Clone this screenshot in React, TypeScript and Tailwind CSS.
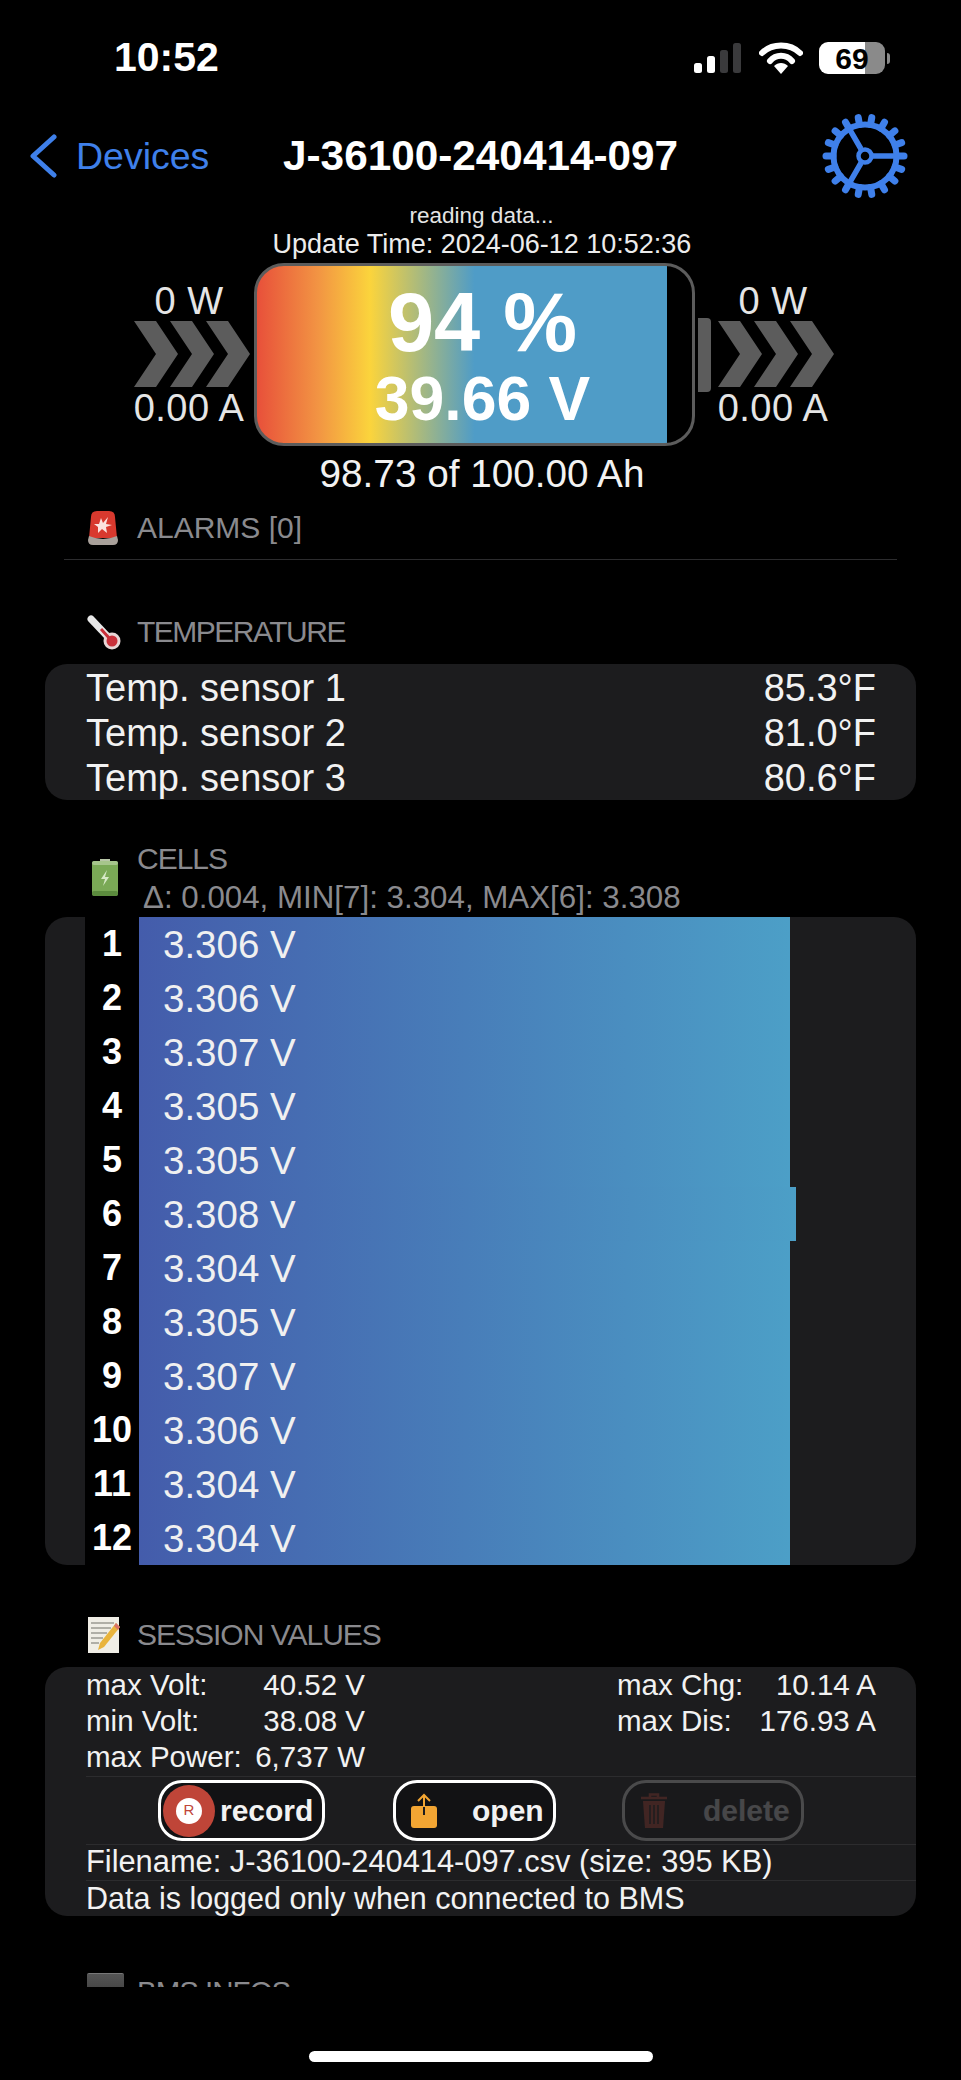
const cells = [
  { n: 1, v: "3.306" },
  { n: 2, v: "3.306" },
  { n: 3, v: "3.307" },
  { n: 4, v: "3.305" },
  { n: 5, v: "3.305" },
  { n: 6, v: "3.308", max: true },
  { n: 7, v: "3.304" },
  { n: 8, v: "3.305" },
  { n: 9, v: "3.307" },
  { n: 10, v: "3.306" },
  { n: 11, v: "3.304" },
  { n: 12, v: "3.304" },
];

const temps = [
  ["Temp. sensor 1", "85.3°F"],
  ["Temp. sensor 2", "81.0°F"],
  ["Temp. sensor 3", "80.6°F"],
];

function SignalIcon() {
  return (
    <svg width="50" height="30" viewBox="0 0 50 30">
      <rect x="1" y="20" width="8" height="10" rx="2.5" fill="#fff" />
      <rect x="14" y="13" width="8" height="17" rx="2.5" fill="#fff" />
      <rect x="27" y="7" width="8" height="23" rx="2.5" fill="#3a3a3c" />
      <rect x="40" y="0" width="8" height="30" rx="2.5" fill="#3a3a3c" />
    </svg>
  );
}

function WifiIcon() {
  return (
    <svg width="44" height="34" viewBox="0 0 44 34">
      <path d="M3 12 C13 2 31 2 41 12" fill="none" stroke="#fff" strokeWidth="6" strokeLinecap="round" />
      <path d="M11 20 C17 13 27 13 33 20" fill="none" stroke="#fff" strokeWidth="6" strokeLinecap="round" />
      <path d="M22 33 L15 25 C19 21 25 21 29 25 Z" fill="#fff" />
    </svg>
  );
}

function GearIcon() {
  const teeth = Array.from({ length: 18 }, (_, i) => 10 + i * 20);
  return (
    <svg width="86" height="88" viewBox="0 0 86 88" fill="none" stroke="#3f80ea">
      {teeth.map((deg) => (
        <path
          key={deg}
          d="M43 12 V5"
          strokeWidth="7"
          strokeLinecap="round"
          transform={`rotate(${deg} 43 44)`}
        />
      ))}
      <circle cx="43" cy="44" r="31.5" strokeWidth="6" />
      <path d="M50 44 H75 M39 37 L27.5 17.2 M39 51 L27.5 70.8" strokeWidth="5.5" />
      <circle cx="43" cy="44" r="6.5" strokeWidth="4.5" />
    </svg>
  );
}

function Chevrons() {
  return (
    <svg width="116" height="66" viewBox="0 0 116 66" fill="#5c5c5c">
      <polygon points="0,0 22,0 44,33 22,66 0,66 22,33" />
      <polygon points="36,0 58,0 80,33 58,66 36,66 58,33" />
      <polygon points="72,0 94,0 116,33 94,66 72,66 94,33" />
    </svg>
  );
}

function AlarmIcon() {
  return (
    <svg width="32" height="36" viewBox="0 0 32 36">
      <path d="M4 7 Q4 1 10 1 L22 1 Q28 1 28 7 L30 28 L2 28 Z" fill="#d8392e" />
      <path d="M14 8 L16 13 L21 7 L19 14 L25 15 L19 17 L20 23 L15 19 L11 23 L11 17 L7 14 L12 14 Z" fill="#fbe3df" />
      <path d="M2 26 Q16 32 30 26 L31 30 Q31 35 26 35 L6 35 Q1 35 1 30 Z" fill="#a9a19b" />
    </svg>
  );
}

function ThermometerIcon() {
  return (
    <svg width="36" height="36" viewBox="0 0 36 36">
      <path d="M4 5 L22 24" stroke="#e8e8e8" strokeWidth="7" strokeLinecap="round" />
      <circle cx="25" cy="27" r="8.5" fill="#e8d6d6" />
      <circle cx="25" cy="27" r="5.5" fill="#c9303a" />
      <path d="M14 15 L23 25" stroke="#c9303a" strokeWidth="3" />
    </svg>
  );
}

function BatteryCellIcon() {
  return (
    <svg width="28" height="38" viewBox="0 0 28 38">
      <rect x="9" y="0" width="10" height="3" fill="#b9c7a8" />
      <rect x="1" y="2" width="26" height="35" rx="3" fill="#7aa956" />
      <rect x="1" y="2" width="26" height="4" rx="2" fill="#a6c58b" />
      <rect x="1" y="32" width="26" height="5" rx="2" fill="#5c8c3e" />
      <path d="M16 11 L10 20 L14 20 L12 27 L18 18 L14 18 Z" fill="#d6e8c6" />
    </svg>
  );
}

function MemoIcon() {
  return (
    <svg width="34" height="38" viewBox="0 0 34 38">
      <rect x="1" y="1" width="31" height="36" fill="#f0eee6" />
      <path d="M4 7 H27 M4 12 H24 M4 17 H20 M4 22 H16 M4 27 H12" stroke="#9b9b92" strokeWidth="1.5" />
      <path d="M29 7 L33 11 L17 31 L11 34 L13 27 Z" fill="#e9b43c" />
      <path d="M29 7 L33 11 L31 14 L27 10 Z" fill="#d8726a" />
    </svg>
  );
}

function RecordIcon() {
  return (
    <span className="w-[52px] h-[52px] rounded-full bg-[#bf4538] flex items-center justify-center shrink-0">
      <span className="w-[26px] h-[26px] rounded-full bg-white text-[#bf4538] text-[15px] font-normal flex items-center justify-center">
        R
      </span>
    </span>
  );
}

function OpenIcon() {
  return (
    <svg width="28" height="36" viewBox="0 0 28 36">
      <rect x="1" y="13" width="26" height="22" rx="3" fill="#f2a533" />
      <path d="M14 3 V22" stroke="#1c1c1e" strokeWidth="2" />
      <path d="M14 2 V14" stroke="#f2a533" strokeWidth="2" />
      <path d="M8 8 L14 2 L20 8" fill="none" stroke="#f2a533" strokeWidth="2" />
    </svg>
  );
}

function TrashIcon() {
  return (
    <svg width="28" height="36" viewBox="0 0 28 36">
      <path d="M10 4 V1.5 H18 V4 M1 5 H27" fill="none" stroke="#d34a38" strokeWidth="2.5" />
      <path d="M3 8 H25 L23 35 H5 Z" fill="#d34a38" />
      <path d="M10 12 V31 M14 12 V31 M18 12 V31" stroke="#1c1c1e" strokeWidth="1.5" />
    </svg>
  );
}

function SectionHeader({
  icon,
  title,
  tracking,
}: {
  icon: React.ReactNode;
  title: string;
  tracking: string;
}) {
  return (
    <div className={`h-[44px] flex items-center pl-[87px] text-[30px] text-[#8a8a8e] ${tracking}`}>
      <span className="w-[50px] flex items-center shrink-0">{icon}</span>
      <span className="pb-[2px]">{title}</span>
    </div>
  );
}

function SideReading({ watts, amps }: { watts: string; amps: string }) {
  return (
    <div className="w-[116px] flex flex-col items-center shrink-0 text-[38px] leading-none text-[#e5e5e5] tracking-[0.5px]">
      <span className="h-[40px] pr-[6px] flex items-center whitespace-nowrap">{watts}</span>
      <Chevrons />
      <span className="h-[42px] pr-[6px] flex items-center whitespace-nowrap">{amps}</span>
    </div>
  );
}

function SessionValue({ label, value }: { label: string; value: string }) {
  return (
    <div className="flex justify-between">
      <span>{label}</span>
      <span>{value}</span>
    </div>
  );
}

export default function App() {
  return (
    <div className="w-[961px] h-[2080px] bg-black text-white overflow-hidden flex flex-col font-['Liberation_Sans',Arial,sans-serif]">
      {/* Status bar */}
      <div className="h-[114px] shrink-0 flex items-center pl-[114px] pr-[71px] justify-between">
        <span className="text-[41px] font-bold pt-[2px]">10:52</span>
        <div className="flex items-center pt-[2px]">
          <SignalIcon />
          <span className="ml-[16px]">
            <WifiIcon />
          </span>
          <span className="ml-[16px] w-[66px] h-[32px] rounded-[9px] bg-[linear-gradient(90deg,#fff_69%,#8a8a8a_69%)] text-black text-[30px] font-bold flex items-center justify-center">
            69
          </span>
          <span className="ml-[2px] w-[3px] h-[11px] rounded-r bg-[#8a8a8a]" />
        </div>
      </div>

      {/* Nav bar */}
      <div className="h-[84px] shrink-0 flex items-center pl-[29px] pr-[53px]">
        <svg width="28" height="44" viewBox="0 0 28 44" fill="none" stroke="#3f80ea" strokeWidth="5" strokeLinecap="round" strokeLinejoin="round">
          <path d="M25 3 L4 22 L25 41" />
        </svg>
        <span className="ml-[19px] w-[207px] text-[37.5px] text-[#3f80ea]">Devices</span>
        <span className="text-[42.3px] font-bold whitespace-nowrap">J-36100-240414-097</span>
        <span className="ml-auto">
          <GearIcon />
        </span>
      </div>

      <div className="h-[32px] mt-[2px] shrink-0 flex items-center justify-center text-[22.5px] pl-[2px] text-[#e5e5e5]">reading data...</div>
      <div className="h-[24px] shrink-0 flex items-center justify-center text-[27px] pl-[3px] text-[#ececec]">
        Update Time: 2024-06-12 10:52:36
      </div>

      {/* Battery */}
      <div className="h-[183px] mt-[7px] shrink-0 flex items-center pl-[134px]">
        <SideReading watts="0 W" amps="0.00 A" />
        <div className="ml-[4px] w-[441px] h-[183px] shrink-0 rounded-[30px] border-[3px] border-[#5c5c5c] overflow-hidden flex flex-col items-center font-bold bg-[linear-gradient(90deg,#e8503a_0%,#f29443_14%,#fbd43c_26%,#4f9cc7_50%,#4f9cc7_94.2%,#000_94.2%)] pl-[16px]">
          <span className="mt-[14px] h-[84px] flex items-center text-[83px] leading-none">94 %</span>
          <span className="mt-[4px] h-[60px] flex items-center text-[62.5px] leading-none">39.66 V</span>
        </div>
        <span className="ml-[3px] w-[13px] h-[74px] rounded-r-[4px] bg-[#5c5c5c] shrink-0" />
        <span className="ml-[7px]">
          <SideReading watts="0 W" amps="0.00 A" />
        </span>
      </div>

      <div className="h-[44px] mt-[6px] shrink-0 flex items-center justify-center text-[38.7px] pl-[3px] text-[#f2f2f2]">98.73 of 100.00 Ah</div>

      <div className="mt-[10px] shrink-0">
        <SectionHeader icon={<AlarmIcon />} title="ALARMS [0]" tracking="tracking-[0px]" />
      </div>
      <div className="mt-[9px] mx-[64px] h-px bg-[#2c2c2e] shrink-0" />

      {/* Temperature */}
      <div className="mt-[50px] shrink-0">
        <SectionHeader icon={<ThermometerIcon />} title="TEMPERATURE" tracking="tracking-[-1.5px]" />
      </div>
      <div className="mt-[10px] mx-[45px] h-[136px] shrink-0 rounded-[22px] bg-[#1c1c1e] pl-[41px] pr-[40px] pt-[2px] flex flex-col text-[38px] text-[#f2f2f2]">
        {temps.map(([label, value]) => (
          <div key={label} className="h-[45px] flex items-center justify-between">
            <span>{label}</span>
            <span>{value}</span>
          </div>
        ))}
      </div>

      {/* Cells */}
      <div className="mt-[38px] h-[79px] shrink-0 pl-[87px] flex text-[#8a8a8e]">
        <span className="w-[50px] pt-[21px] pl-[4px] shrink-0">
          <BatteryCellIcon />
        </span>
        <div className="flex flex-col">
          <span className="h-[40px] flex items-center text-[30px] tracking-[-1px]">CELLS</span>
          <span className="h-[40px] flex items-center pl-[6px] text-[31.3px] whitespace-nowrap">Δ: 0.004, MIN[7]: 3.304, MAX[6]: 3.308</span>
        </div>
      </div>
      <div className="mx-[45px] h-[648px] shrink-0 rounded-[22px] bg-[#1c1c1e] overflow-hidden pl-[40px] flex flex-col">
        {cells.map((c) => (
          <div key={c.n} className="h-[54px] flex items-stretch">
            <span className="w-[54px] bg-black flex items-center justify-center text-[36px] font-bold shrink-0">{c.n}</span>
            <span
              className={`${c.max ? "w-[657px]" : "w-[651px]"} pl-[24px] pt-[1px] flex items-center text-[38.5px] text-[#f0f0f0] bg-[linear-gradient(90deg,#445cab,#4c9fc7)]`}
            >
              {c.v} V
            </span>
          </div>
        ))}
      </div>

      {/* Session values */}
      <div className="mt-[48px] shrink-0">
        <SectionHeader icon={<MemoIcon />} title="SESSION VALUES" tracking="tracking-[-1px]" />
      </div>
      <div className="mt-[10px] mx-[45px] h-[249px] shrink-0 rounded-[22px] bg-[#1c1c1e] pl-[41px] flex flex-col text-[#f2f2f2]">
        <div className="h-[109px] flex text-[29.5px]">
          <div className="w-[279px] flex flex-col">
            <div className="h-[36px] flex items-center">
              <div className="w-full">
                <SessionValue label="max Volt:" value="40.52 V" />
              </div>
            </div>
            <div className="h-[37px] flex items-center">
              <div className="w-full">
                <SessionValue label="min Volt:" value="38.08 V" />
              </div>
            </div>
            <div className="h-[35px] flex items-center">
              <div className="w-full">
                <SessionValue label="max Power:" value="6,737 W" />
              </div>
            </div>
          </div>
          <div className="ml-[252px] w-[259px] flex flex-col">
            <div className="h-[36px] flex items-center">
              <div className="w-full">
                <SessionValue label="max Chg:" value="10.14 A" />
              </div>
            </div>
            <div className="h-[37px] flex items-center">
              <div className="w-full">
                <SessionValue label="max Dis:" value="176.93 A" />
              </div>
            </div>
          </div>
        </div>
        <div className="h-[69px] border-y border-[#2c2c2e] flex items-center text-[30px] font-bold">
          <div className="ml-[72px] w-[167px] h-[61px] rounded-[24px] border-[3px] border-white bg-[#121214] flex items-center pl-[2px]">
            <RecordIcon />
            <span className="ml-[5px]">record</span>
          </div>
          <div className="ml-[68px] w-[163px] h-[61px] rounded-[24px] border-[3px] border-white bg-[#121214] flex items-center pl-[14px]">
            <OpenIcon />
            <span className="ml-[34px]">open</span>
          </div>
          <div className="ml-[66px] w-[182px] h-[61px] rounded-[24px] border-[3px] border-white bg-[#121214] flex items-center pl-[15px] opacity-20">
            <TrashIcon />
            <span className="ml-[35px]">delete</span>
          </div>
        </div>
        <div className="h-[36px] border-b border-[#2c2c2e] flex items-center text-[30.8px] whitespace-nowrap">Filename: J-36100-240414-097.csv (size: 395 KB)</div>
        <div className="h-[35px] flex items-center text-[30.5px] whitespace-nowrap">Data is logged only when connected to BMS</div>
      </div>

      {/* BMS infos, cut off by the scroll view */}
      <div className="mt-[57px] h-[14px] shrink-0 overflow-hidden pl-[87px] flex text-[29.5px] leading-none text-[#8a8a8e]">
        <span className="w-[37px] h-[34px] rounded-[2px] bg-[linear-gradient(180deg,#555,#333)] border-t border-[#777] shrink-0" />
        <span className="ml-[13px] mt-[4px] tracking-[-1px]">BMS INFOS</span>
      </div>

      <div className="mt-[64px] mx-auto w-[344px] h-[11px] rounded-full bg-white shrink-0" />
    </div>
  );
}
